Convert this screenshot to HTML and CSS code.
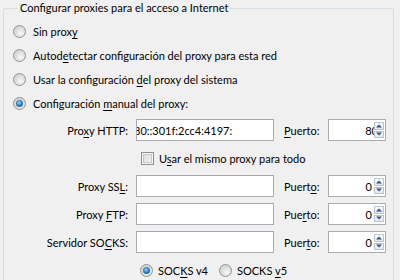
FILE: index.html
```html
<!DOCTYPE html>
<html lang="es">
<head>
<meta charset="utf-8">
<link rel="stylesheet" href="styles.css">
</head>
<body>
<fieldset class="group">
  <legend class="group-title">Configurar proxies para el acceso a Internet</legend>
  <div class="options">
    <div class="opt"><span class="radio"></span><span>Sin prox<u>y</u></span></div>
    <div class="opt"><span class="radio"></span><span>Autod<u>e</u>tectar configuración del proxy para esta red</span></div>
    <div class="opt"><span class="radio"></span><span>Usar la configuración <u>d</u>el proxy del sistema</span></div>
    <div class="opt"><span class="radio checked"></span><span>Configuración <u>m</u>anual del proxy:</span></div>
  </div>
  <div class="manual">
    <span class="lbl">Pro<u>x</u>y HTTP:</span>
    <span class="field"><span class="field-text">80::301f:2cc4:4197:</span></span>
    <span class="plbl"><u>P</u>uerto:</span>
    <span class="port"><span class="port-val port-cut">80</span><span class="spin"><span class="spin-btn up"></span><span class="spin-btn down"></span></span></span>

    <span class="check-row"><span class="check"></span><span>U<u>s</u>ar el mismo proxy para todo</span></span>

    <span class="lbl">Proxy SS<u>L</u>:</span>
    <span class="field"></span>
    <span class="plbl">Puert<u>o</u>:</span>
    <span class="port"><span class="port-val">0</span><span class="spin"><span class="spin-btn up"></span><span class="spin-btn down"></span></span></span>

    <span class="lbl">Proxy <u>F</u>TP:</span>
    <span class="field"></span>
    <span class="plbl">Pue<u>r</u>to:</span>
    <span class="port"><span class="port-val">0</span><span class="spin"><span class="spin-btn up"></span><span class="spin-btn down"></span></span></span>

    <span class="lbl">Servidor SO<u>C</u>KS:</span>
    <span class="field"></span>
    <span class="plbl">Puer<u>t</u>o:</span>
    <span class="port"><span class="port-val">0</span><span class="spin"><span class="spin-btn up"></span><span class="spin-btn down"></span></span></span>

    <span class="socks-row">
      <span class="socks-opt"><span class="radio checked"></span><span>SOC<u>K</u>S v4</span></span>
      <span class="socks-opt"><span class="radio"></span><span>SOCKS <u>v</u>5</span></span>
    </span>
  </div>
</fieldset>
</body>
</html>
```

FILE: styles.css
```css
html, body {
  margin: 0;
  padding: 0;
  background: #f0f0f0;
  width: 400px;
  height: 280px;
  overflow: hidden;
}
body {
  font-family: Lato, "Open Sans", sans-serif;
  font-size: 11px;
  color: #000;
}
u { text-decoration-thickness: 1px; text-underline-offset: 2px; }

.group {
  margin: 0 6px 0 3px;
  padding: 3px 0 0 9px;
  border: 1px solid #d5dfe5;
  border-bottom: none;
  border-radius: 3px 3px 0 0;
  height: 280px;
  box-sizing: border-box;
  overflow: hidden;
}
.group-title {
  padding: 0 2px;
  margin-left: 5px;
  line-height: 16px;
}
.options {
  display: flex;
  flex-direction: column;
}
.opt {
  height: 24px;
  display: flex;
  align-items: center;
  gap: 7px;
}
.radio {
  width: 13px;
  height: 13px;
  box-sizing: border-box;
  border-radius: 50%;
  border: 1px solid #939393;
  background: radial-gradient(circle at 60% 65%, #f6f6f6 0, #e0e0e0 45%, #c8c8c8 100%);
  flex: none;
  position: relative;
}
.radio.checked::after {
  content: "";
  position: absolute;
  left: 2px; top: 2px;
  width: 7px; height: 7px;
  border-radius: 50%;
  background: radial-gradient(circle at 45% 40%, #9fd3f7 0, #2a86c6 45%, #164a73 100%);
}
.manual {
  display: grid;
  grid-template-columns: 116px 148px 44px 58px;
  grid-auto-rows: 22px;
  row-gap: 6px;
  margin-left: 7px;
  margin-top: 4px;
  align-items: center;
}
.lbl {
  justify-self: end;
  padding-right: 8px;
  white-space: nowrap;
}
.field {
  width: 138px;
  height: 22px;
  box-sizing: border-box;
  border: 1px solid #abadb3;
  border-top-color: #a3a7ae;
  background: #fff;
  overflow: hidden;
  display: flex;
  align-items: center;
}
.field-text {
  white-space: nowrap;
  margin-left: -3px;
}
.plbl { white-space: nowrap; }
.port {
  height: 22px;
  width: 58px;
  box-sizing: border-box;
  border: 1px solid #abadb3;
  background: #fff;
  display: flex;
  align-items: center;
  justify-content: flex-end;
  overflow: hidden;
}
.port-val {
  padding-right: 2px;
}
.port-cut {
  margin-right: -4px;
  padding-right: 0;
  position: relative;
  z-index: 0;
}
.spin {
  width: 10px;
  align-self: stretch;
  display: flex;
  flex-direction: column;
  justify-content: center;
  gap: 1px;
  padding: 2px 1px 2px 0;
  background: #fff;
  position: relative;
  z-index: 1;
}
.spin-btn {
  flex: 1;
  border: 1px solid #b9c4d4;
  background: linear-gradient(#f8f9fb, #e3e7ee);
  position: relative;
}
.spin-btn::after {
  content: "";
  position: absolute;
  left: 50%;
  top: 50%;
  transform: translate(-50%, -50%);
  border-left: 3px solid transparent;
  border-right: 3px solid transparent;
}
.spin-btn.up::after { border-bottom: 3px solid #3b4f8a; }
.spin-btn.down::after { border-top: 3px solid #3b4f8a; }

.check-row {
  grid-column: 2 / 5;
  height: 19px;
  display: flex;
  align-items: center;
  gap: 5px;
  padding-left: 5px;
}
.check {
  width: 13px;
  height: 13px;
  box-sizing: border-box;
  border: 1px solid #8f8f8f;
  background: linear-gradient(135deg, #d9d9d9, #f5f5f5);
  box-shadow: inset 0 0 0 1px #f4f4f4, inset 0 0 0 2px #c8c8c8;
  flex: none;
}
.socks-row {
  grid-column: 2 / 5;
  display: flex;
  align-items: center;
  gap: 11px;
  padding-left: 4px;
}
.socks-opt {
  display: flex;
  align-items: center;
  gap: 5px;
}
```
